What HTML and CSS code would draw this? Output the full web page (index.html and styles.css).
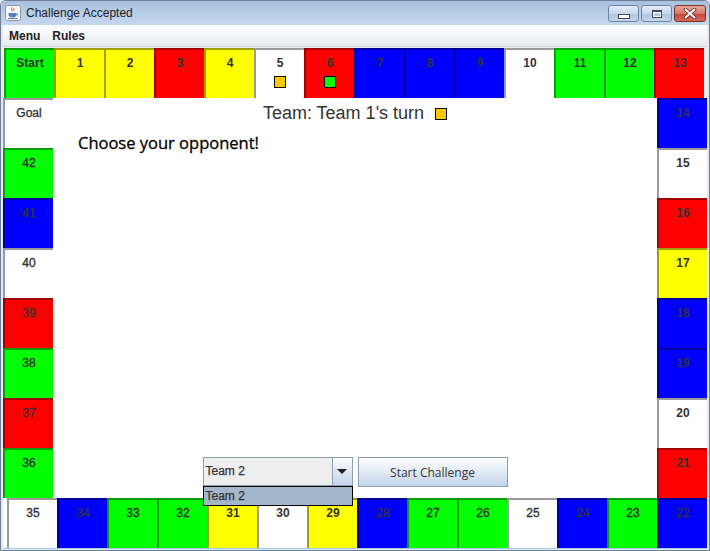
FILE: index.html
```html
<!DOCTYPE html>
<html>
<head>
<meta charset="utf-8">
<title>Challenge Accepted</title>
<link rel="stylesheet" href="styles.css">
</head>
<body>
<div class="window">
  <div class="titlebar">
    <svg class="app-icon" width="16" height="16" viewBox="0 0 16 16">
      <rect x="0.5" y="0.5" width="15" height="15" rx="2" fill="#f4f6f9" stroke="#8a97a8"/>
      <path d="M7 2.5c-1.5 1.2 1.2 2 -0.2 3.6M9 3c-1 1 0.8 1.6 -0.3 2.7" stroke="#e0501e" stroke-width="1" fill="none"/>
      <path d="M3.5 8h8v1.5c0 1.8-1.6 3-4 3s-4-1.2-4-3z" fill="#5a7fb5"/>
      <path d="M11.5 8.5c1.6 0 1.6 2 0 2" stroke="#5a7fb5" stroke-width="1" fill="none"/>
      <path d="M3 13.5h9.5" stroke="#5a7fb5" stroke-width="1"/>
    </svg>
    <span class="title">Challenge Accepted</span>
    <div class="wbtns">
      <div class="wbtn"><span class="g-min"></span></div>
      <div class="wbtn"><span class="g-max"></span></div>
      <div class="wbtn close">
        <svg width="14" height="11" viewBox="0 0 14 11">
          <path d="M2.5 1.5L11.5 9.5M11.5 1.5L2.5 9.5" stroke="#5a2a22" stroke-width="3.6" stroke-linecap="round"/>
          <path d="M2.5 1.5L11.5 9.5M11.5 1.5L2.5 9.5" stroke="#ffffff" stroke-width="2" stroke-linecap="round"/>
        </svg>
      </div>
    </div>
  </div>
  <div class="menubar">
    <span class="menu-item">Menu</span>
    <span class="menu-item">Rules</span>
  </div>
  <div class="board">
    <div class="row top">
      <div class="tile g bd">Start</div>
      <div class="tile y bd">1</div>
      <div class="tile y bd">2</div>
      <div class="tile r bd">3</div>
      <div class="tile y bd">4</div>
      <div class="tile w bd">5<span class="token orange"></span></div>
      <div class="tile r bd">6<span class="token green"></span></div>
      <div class="tile b bd">7</div>
      <div class="tile b bd">8</div>
      <div class="tile b bd">9</div>
      <div class="tile w bd">10</div>
      <div class="tile g bd">11</div>
      <div class="tile g bd">12</div>
      <div class="tile r bd">13</div>
    </div>
    <div class="middle">
      <div class="col">
        <div class="tile w">Goal</div>
        <div class="tile g">42</div>
        <div class="tile b">41</div>
        <div class="tile w">40</div>
        <div class="tile r">39</div>
        <div class="tile g">38</div>
        <div class="tile r">37</div>
        <div class="tile g">36</div>
      </div>
      <div class="center">
        <div class="turn">
          <span>Team: Team 1's turn</span>
          <span class="turn-token"></span>
        </div>
        <div class="prompt">Choose your opponent!</div>
        <div class="controls">
          <div class="combo">
            <div class="combo-text">Team 2</div>
            <div class="combo-arrow"><span class="tri"></span></div>
            <div class="popup">Team 2</div>
          </div>
          <div class="btn">Start Challenge</div>
        </div>
      </div>
      <div class="col">
        <div class="tile b bd">14</div>
        <div class="tile w bd">15</div>
        <div class="tile r bd">16</div>
        <div class="tile y bd">17</div>
        <div class="tile b bd">18</div>
        <div class="tile b bd">19</div>
        <div class="tile w bd">20</div>
        <div class="tile r bd">21</div>
      </div>
    </div>
    <div class="row bottom">
      <div class="tile w">35</div>
      <div class="tile b">34</div>
      <div class="tile g">33</div>
      <div class="tile g">32</div>
      <div class="tile y bd">31</div>
      <div class="tile w bd">30</div>
      <div class="tile y bd">29</div>
      <div class="tile b">28</div>
      <div class="tile g">27</div>
      <div class="tile g">26</div>
      <div class="tile w">25</div>
      <div class="tile b">24</div>
      <div class="tile g">23</div>
      <div class="tile b">22</div>
    </div>
  </div>
</div>
</body>
</html>
```

FILE: styles.css
```css
html, body {
  margin: 0;
  padding: 0;
}

body {
  width: 710px;
  height: 551px;
  overflow: hidden;
  background: #dfe8f4;
  font-family: "Liberation Sans", Arial, sans-serif;
}

.window {
  width: 710px;
  height: 551px;
  box-sizing: border-box;
  border: 1px solid #6f7e92;
  border-radius: 6px 6px 0 0;
  padding: 0 2px 1px 2px;
  background: #e2eaf5;
  display: flex;
  flex-direction: column;
}

/* ---------- title bar ---------- */
.titlebar {
  height: 24px;
  margin: 0 -2px;
  display: flex;
  align-items: flex-start;
  background: linear-gradient(#a9c1de, #b9cee8 55%, #c4d7ee);
  border-radius: 5px 5px 0 0;
}

.app-icon {
  margin: 4px 0 0 4px;
  flex: none;
}

.title {
  margin: 4px 0 0 5px;
  font-size: 12px;
  line-height: 16px;
  color: #1c1c1c;
}

.wbtns {
  margin: 4px 3px 0 auto;
  display: flex;
  gap: 2px;
}

.wbtn {
  width: 31px;
  height: 17px;
  box-sizing: border-box;
  border: 1px solid #6d84a3;
  border-radius: 3px;
  background: linear-gradient(#e3ecf7, #c6d6ea 50%, #aec3de 51%, #c7d8ec);
  display: flex;
  align-items: center;
  justify-content: center;
}

.wbtn.close {
  width: 32px;
  border-color: #7a2f25;
  background: linear-gradient(#e9a99c, #d5766a 50%, #c5453a 51%, #d66a55);
}

.g-min {
  width: 10px;
  height: 3px;
  margin-top: 5px;
  border: 1px solid #3b4a60;
  background: #ffffff;
}

.g-max {
  width: 8px;
  height: 5px;
  border: 1px solid #3b4a60;
  border-top-width: 2px;
  background: transparent;
  box-shadow: inset 0 0 0 1px #ffffff;
}

/* ---------- menu bar ---------- */
.menubar {
  height: 21px;
  padding-left: 6px;
  display: flex;
  align-items: center;
  gap: 12px;
  background: linear-gradient(#fdfeff, #f4f6f9 50%, #e6e9ee);
  border-bottom: 1px solid #d3d6dc;
  font-size: 12px;
  font-weight: bold;
  color: #222;
}

/* ---------- board ---------- */
.board {
  padding-top: 1px;
  background: #eeeeee;
  border-bottom: 1px solid #9ccbea;
  display: flex;
  flex-direction: column;
}

.row {
  display: flex;
  height: 50px;
}

.row.top {
  padding-left: 1px;
}

.row.bottom {
  justify-content: flex-end;
  background: #ffffff;
}

.middle {
  display: flex;
  height: 400px;
}

.col {
  width: 50px;
  display: flex;
  flex-direction: column;
}

.tile {
  width: 50px;
  height: 50px;
  flex: none;
  box-sizing: border-box;
  border-top: 2px solid;
  border-left: 2px solid;
  padding-top: 5px;
  display: flex;
  flex-direction: column;
  align-items: center;
  font-size: 12px;
  line-height: 16px;
  color: #333333;
  -webkit-text-stroke: 0.35px #333333;
}

.tile.bd {
  font-weight: bold;
  -webkit-text-stroke: 0;
}

.g { background: #00ff00; border-color: #0a9a0a; }
.y { background: #ffff00; border-color: #a0a000; }
.r { background: #ff0000; border-color: #a00000; }
.b { background: #0000ff; border-color: #0000a0; }
.w { background: #ffffff; border-color: #9a9a9a; }

.token {
  width: 12px;
  height: 12px;
  margin-top: 5px;
  box-sizing: border-box;
  border: 1.5px solid #000000;
}

.token.orange { background: #ffc800; }
.token.green { background: #00ff00; }

/* ---------- center panel ---------- */
.center {
  flex: 1;
  background: #ffffff;
  display: flex;
  flex-direction: column;
}

.turn {
  padding-top: 5px;
  display: flex;
  justify-content: center;
  align-items: center;
  gap: 11px;
  font-size: 18px;
  line-height: 21px;
  color: #333333;
}

.turn-token {
  width: 12px;
  height: 12px;
  box-sizing: border-box;
  border: 1.5px solid #000000;
  background: #ffc800;
}

.prompt {
  margin: 9px 0 0 25px;
  font-family: "Open Sans", "Liberation Sans", sans-serif;
  font-size: 16.5px;
  line-height: 20px;
  color: #000000;
  -webkit-text-stroke: 0.3px #000000;
}

.controls {
  margin-top: auto;
  margin-bottom: 11px;
  display: flex;
  justify-content: center;
  align-items: flex-start;
  gap: 5px;
}

.combo {
  position: relative;
  width: 150px;
  height: 29px;
  box-sizing: border-box;
  border: 1px solid #8c9fb7;
  background: #eeeeee;
  display: flex;
}

.combo-text {
  flex: 1;
  padding-left: 2px;
  font-size: 12px;
  line-height: 27px;
  color: #333333;
  -webkit-text-stroke: 0.25px #333333;
}

.combo-arrow {
  width: 19px;
  border-left: 1px solid #8c9fb7;
  background: linear-gradient(#ffffff, #dde7f3 50%, #c6d6ea);
  display: flex;
  align-items: center;
  justify-content: center;
}

.tri {
  width: 0;
  height: 0;
  border-left: 5px solid transparent;
  border-right: 5px solid transparent;
  border-top: 5px solid #1e1e1e;
}

.popup {
  position: absolute;
  left: -1px;
  top: 28px;
  width: 150px;
  height: 20px;
  box-sizing: border-box;
  border: 1px solid #000000;
  background: #a4b6ca;
  padding-left: 2px;
  font-size: 12px;
  line-height: 18px;
  color: #333333;
  -webkit-text-stroke: 0.25px #333333;
  z-index: 5;
}

.btn {
  width: 150px;
  height: 30px;
  box-sizing: border-box;
  border: 1px solid #8a9cb6;
  background: linear-gradient(#ffffff, #e4ecf6 45%, #c3d4ea);
  display: flex;
  align-items: center;
  justify-content: center;
  font-family: "Open Sans", "Liberation Sans", sans-serif;
  font-size: 12px;
  color: #333333;
}
```
